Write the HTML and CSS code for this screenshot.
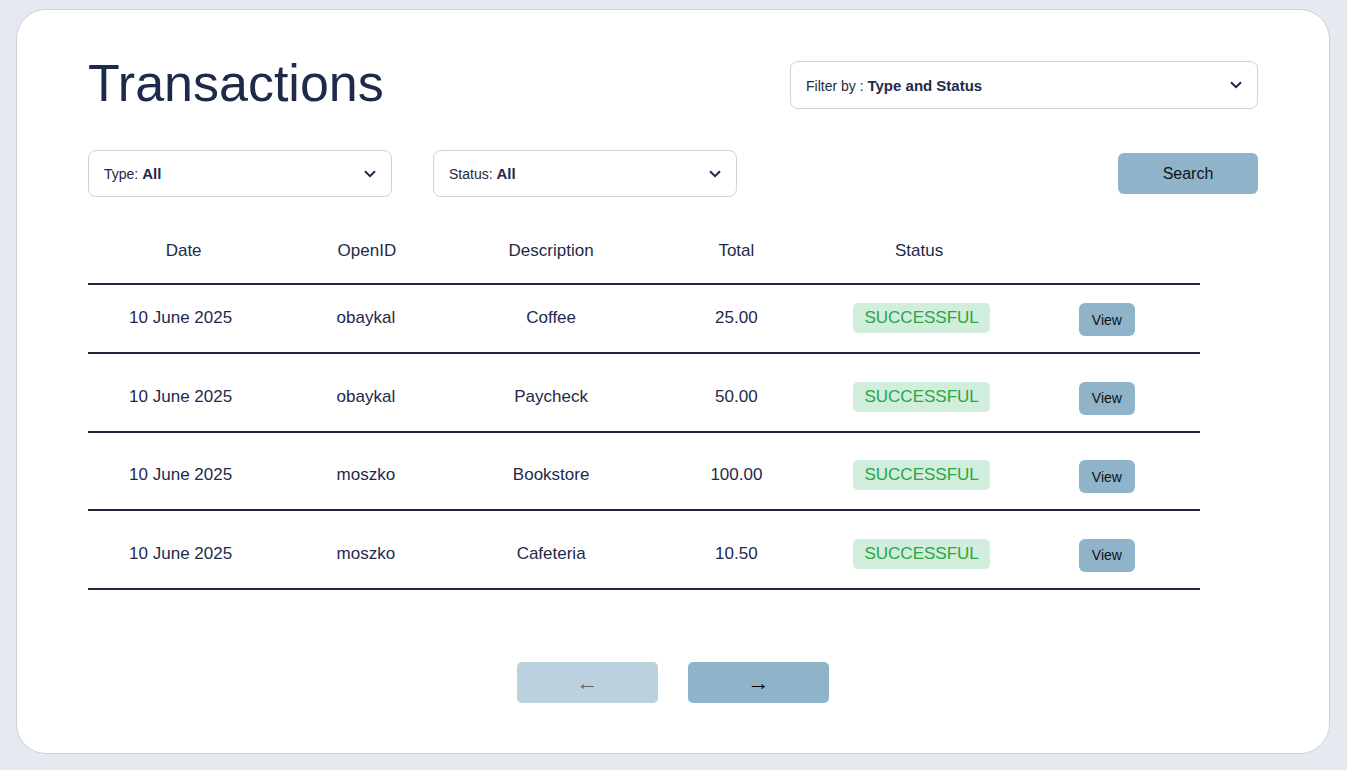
FILE: index.html
```html
<!DOCTYPE html>
<html lang="en">
<head>
<meta charset="utf-8">
<title>Transactions</title>
<link rel="stylesheet" href="styles.css">
</head>
<body>
<div class="card">
  <div class="top">
    <h1 class="title">Transactions</h1>
    <div class="select select-wide">
      <span class="select-text">Filter by : <b>Type and Status</b></span>
      <svg class="chev" width="12" height="8" viewBox="0 0 12 8"><polyline points="1,1.2 6,6.2 11,1.2" fill="none" stroke="#1e2a4a" stroke-width="2"/></svg>
    </div>
  </div>
  <div class="filters">
    <div class="select">
      <span class="select-text">Type: <b>All</b></span>
      <svg class="chev" width="12" height="8" viewBox="0 0 12 8"><polyline points="1,1.2 6,6.2 11,1.2" fill="none" stroke="#1e2a4a" stroke-width="2"/></svg>
    </div>
    <div class="select">
      <span class="select-text">Status: <b>All</b></span>
      <svg class="chev" width="12" height="8" viewBox="0 0 12 8"><polyline points="1,1.2 6,6.2 11,1.2" fill="none" stroke="#1e2a4a" stroke-width="2"/></svg>
    </div>
    <button class="btn search">Search</button>
  </div>
  <div class="table">
    <div class="row head">
      <div class="cell">Date</div>
      <div class="cell">OpenID</div>
      <div class="cell">Description</div>
      <div class="cell">Total</div>
      <div class="cell">Status</div>
      <div class="cell"></div>
    </div>
    <div class="row data">
      <div class="cell">10 June 2025</div>
      <div class="cell">obaykal</div>
      <div class="cell">Coffee</div>
      <div class="cell">25.00</div>
      <div class="cell"><span class="badge">SUCCESSFUL</span></div>
      <div class="cell"><button class="btn view">View</button></div>
    </div>
    <div class="row data">
      <div class="cell">10 June 2025</div>
      <div class="cell">obaykal</div>
      <div class="cell">Paycheck</div>
      <div class="cell">50.00</div>
      <div class="cell"><span class="badge">SUCCESSFUL</span></div>
      <div class="cell"><button class="btn view">View</button></div>
    </div>
    <div class="row data">
      <div class="cell">10 June 2025</div>
      <div class="cell">moszko</div>
      <div class="cell">Bookstore</div>
      <div class="cell">100.00</div>
      <div class="cell"><span class="badge">SUCCESSFUL</span></div>
      <div class="cell"><button class="btn view">View</button></div>
    </div>
    <div class="row data">
      <div class="cell">10 June 2025</div>
      <div class="cell">moszko</div>
      <div class="cell">Cafeteria</div>
      <div class="cell">10.50</div>
      <div class="cell"><span class="badge">SUCCESSFUL</span></div>
      <div class="cell"><button class="btn view">View</button></div>
    </div>
  </div>
  <div class="pager">
    <button class="btn page" disabled>&larr;</button>
    <button class="btn page">&rarr;</button>
  </div>
</div>
</body>
</html>
```
FILE: styles.css
```css
* { box-sizing: border-box; }

html, body { height: 100%; }

body {
  margin: 0;
  padding: 9px 17px 15px 16px;
  background: #e5e9f0;
  font-family: "Liberation Sans", Arial, sans-serif;
  color: #1e2a4a;
}

.card {
  background: #ffffff;
  border: 1px solid #cdd1d8;
  border-radius: 30px;
  padding: 41px 71px 50px 71px;
}

.top {
  display: flex;
  align-items: flex-start;
  justify-content: space-between;
}

.title {
  margin: 0;
  font-size: 52px;
  line-height: 64px;
  font-weight: normal;
  color: #1e2a4a;
}

.select {
  display: flex;
  align-items: center;
  justify-content: space-between;
  width: 304px;
  height: 47px;
  padding: 0 15px;
  border: 1px solid #d3d3d3;
  border-radius: 8px;
  background: #fff;
  font-size: 14px;
  color: #222a3c;
}

.select-wide {
  width: 468px;
  height: 48px;
  margin-top: 10px;
}

.select-text b {
  font-weight: bold;
  font-size: 15px;
  color: #1e2a4a;
}

.chev { display: block; }

.filters {
  display: flex;
  align-items: center;
  gap: 41px;
  margin-top: 35px;
}

.btn {
  font-family: "Liberation Sans", Arial, sans-serif;
  border: none;
  background: #8fb4c9;
  color: #111;
  cursor: pointer;
  padding: 0;
}

.search {
  margin-left: auto;
  width: 140px;
  height: 41px;
  border-radius: 6px;
  font-size: 16px;
}

.table {
  width: 95%;
  margin-top: 23px;
}

.row {
  display: grid;
  grid-template-columns: repeat(6, 1fr);
  align-items: start;
  border-bottom: 2px solid #1e2540;
}

.cell {
  display: flex;
  justify-content: center;
  font-size: 17px;
  color: #1e2a4a;
}

.head {
  padding: 21px 0 22px;
}

.head .cell { line-height: 20px; }
.head .cell:first-child { padding-left: 6px; }
.head .cell:nth-child(2) { padding-left: 2px; }
.head .cell:nth-child(5) { padding-right: 5px; }

.data {
  padding: 27.5px 0 16px;
  min-height: 78.5px;
}

.head + .data { padding-top: 18px; min-height: 69px; }

.data .cell { line-height: 30px; }

.badge {
  display: inline-block;
  height: 30px;
  line-height: 30px;
  padding: 0 11px;
  border-radius: 5px;
  background: #d1eddb;
  color: #28a745;
  font-size: 17px;
}

.view {
  width: 56px;
  height: 33px;
  border-radius: 6px;
  font-size: 14px;
}

.pager {
  display: flex;
  justify-content: center;
  gap: 30px;
  margin-top: 72.5px;
}

.page {
  width: 141px;
  height: 41px;
  border-radius: 5px;
  font-size: 22px;
  line-height: 41px;
  color: #000;
}

.page:disabled {
  opacity: 0.6;
  cursor: default;
}
```
